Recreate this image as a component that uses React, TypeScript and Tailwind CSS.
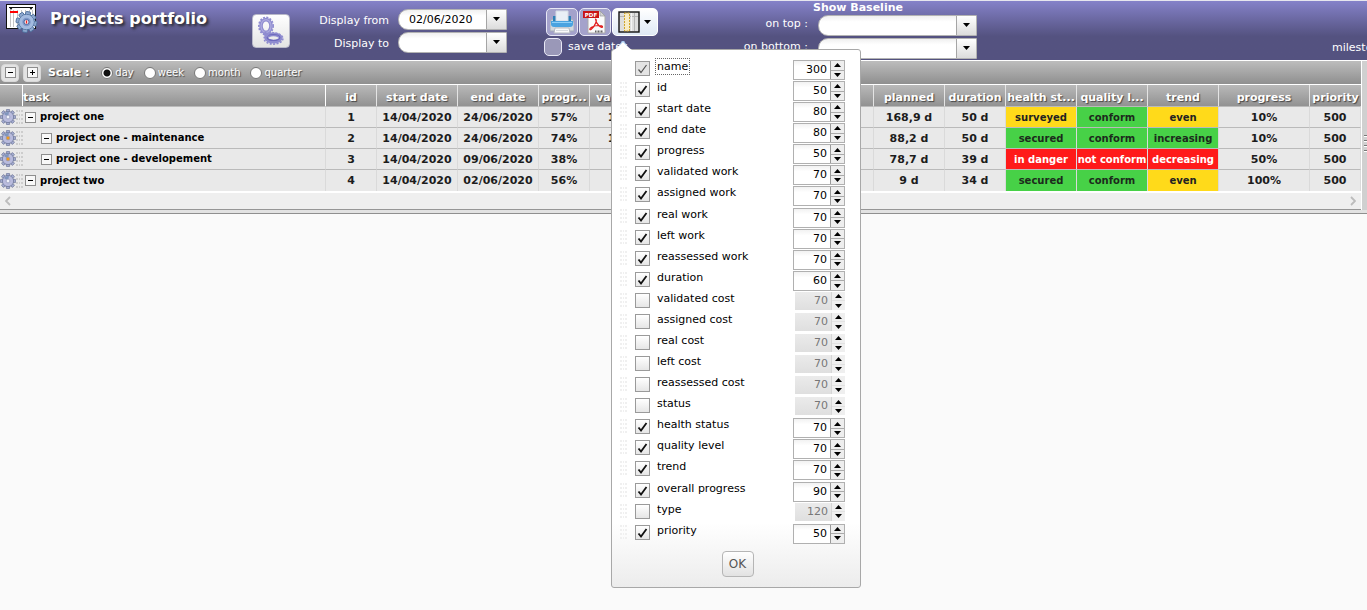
import type { ReactNode } from "react";

type Column = { label: string; width: number; on: boolean; locked?: boolean };

const columns: Column[] = [
  { label: "name", width: 300, on: true, locked: true },
  { label: "id", width: 50, on: true },
  { label: "start date", width: 80, on: true },
  { label: "end date", width: 80, on: true },
  { label: "progress", width: 50, on: true },
  { label: "validated work", width: 70, on: true },
  { label: "assigned work", width: 70, on: true },
  { label: "real work", width: 70, on: true },
  { label: "left work", width: 70, on: true },
  { label: "reassessed work", width: 70, on: true },
  { label: "duration", width: 60, on: true },
  { label: "validated cost", width: 70, on: false },
  { label: "assigned cost", width: 70, on: false },
  { label: "real cost", width: 70, on: false },
  { label: "left cost", width: 70, on: false },
  { label: "reassessed cost", width: 70, on: false },
  { label: "status", width: 70, on: false },
  { label: "health status", width: 70, on: true },
  { label: "quality level", width: 70, on: true },
  { label: "trend", width: 70, on: true },
  { label: "overall progress", width: 90, on: true },
  { label: "type", width: 120, on: false },
  { label: "priority", width: 50, on: true },
];

type Project = {
  name: string;
  child: boolean;
  before: string[];
  planned: string;
  duration: string;
  health: string;
  quality: string;
  trend: string;
  overall: string;
  priority: string;
};

const projects: Project[] = [
  { name: "project one", child: false, before: ["1", "14/04/2020", "24/06/2020", "57%", "160 d"], planned: "168,9 d", duration: "50 d", health: "surveyed", quality: "conform", trend: "even", overall: "10%", priority: "500" },
  { name: "project one - maintenance", child: true, before: ["2", "14/04/2020", "24/06/2020", "74%", "100 d"], planned: "88,2 d", duration: "50 d", health: "secured", quality: "conform", trend: "increasing", overall: "10%", priority: "500" },
  { name: "project one - developement", child: true, before: ["3", "14/04/2020", "09/06/2020", "38%", ""], planned: "78,7 d", duration: "39 d", health: "in danger", quality: "not conform", trend: "decreasing", overall: "50%", priority: "500" },
  { name: "project two", child: false, before: ["4", "14/04/2020", "02/06/2020", "56%", ""], planned: "9 d", duration: "34 d", health: "secured", quality: "conform", trend: "even", overall: "100%", priority: "500" },
];

const tones: Record<string, string> = {
  surveyed: "text-[10px] bg-[#ffda1a] text-[#222]",
  even: "text-[10px] bg-[#ffda1a] text-[#222]",
  secured: "text-[10px] bg-[#47d147] text-[#1c2a1c]",
  conform: "text-[10px] bg-[#47d147] text-[#1c2a1c]",
  increasing: "text-[10px] bg-[#47d147] text-[#1c2a1c]",
  "in danger": "text-[10px] bg-[#ff1a1a] text-white",
  "not conform": "text-[10px] bg-[#ff1a1a] text-white",
  decreasing: "text-[10px] bg-[#ff1a1a] text-white",
};

const headings = ["id", "start date", "end date", "progr...", "validated", "assigned", "real", "left", "planned", "duration", "health st...", "quality l...", "trend", "progress", "priority"];

const teeth = [0, 45, 90, 135, 180, 225, 270, 315];

function Gear({ hub, className }: { hub: string; className: string }) {
  return (
    <svg viewBox="0 0 16 16" className={className} aria-hidden="true">
      <g fill="#a3abd0" stroke="#6d7596" strokeWidth="0.7">
        {teeth.map((a) => (
          <rect key={a} x="6.4" y="0.3" width="3.2" height="4" rx="0.6" transform={`rotate(${a} 8 8)`} />
        ))}
        <circle cx="8" cy="8" r="5.6" />
      </g>
      <circle cx="8" cy="8" r="5" fill="#b9bbdd" />
      <path d="M8 8L4 5a5 5 0 0 1 5-2z" fill="#8096bd" />
      <circle cx="8" cy="8" r="1.9" fill={hub} stroke="#8f96b8" strokeWidth="0.7" />
    </svg>
  );
}

function Arrow({ up = false }: { up?: boolean }) {
  return (
    <svg viewBox="0 0 7 4" className="h-1 w-[7px] shrink-0" aria-hidden="true">
      <path d={up ? "M0 4L3.5 0L7 4z" : "M0 0H7L3.5 4z"} fill="#000" />
    </svg>
  );
}

const arrowBox = "flex w-5 items-center justify-center border-l border-[#a5a5a5] bg-linear-to-b from-white to-[#dcdcdc] pb-0.5";
const fieldBox = "flex h-[21px] overflow-hidden rounded-l-[10px] border border-[#b3b3b3] bg-linear-to-b from-[#f0f0f0] via-white via-30% to-white text-black";

function DateField({ id, value }: { id: string; value: string }) {
  return (
    <div className={fieldBox}>
      <input id={id} defaultValue={value} className="w-0 min-w-0 flex-1 bg-transparent pl-[10px] text-[11px] outline-none" />
      <button aria-label="Open calendar" className={arrowBox}><Arrow /></button>
    </div>
  );
}

function BaselineField({ id }: { id: string }) {
  return (
    <div className={"relative " + fieldBox}>
      <select id={id} className="w-full appearance-none bg-transparent text-[11px] outline-none"><option /></select>
      <span className={"pointer-events-none absolute inset-y-0 right-0 " + arrowBox}><Arrow /></span>
    </div>
  );
}

function Fold({ sign }: { sign: "-" | "+" }) {
  return (
    <svg viewBox="0 0 11 11" className="size-[11px] shrink-0" aria-hidden="true">
      <rect x="0.5" y="0.5" width="10" height="10" fill="#f8f8f8" stroke="#8e8e8e" />
      <path d={sign === "+" ? "M3 5.5H8M5.5 3V8" : "M3 5.5H8"} stroke="#000" />
    </svg>
  );
}

function Grip({ tone }: { tone: string }) {
  return (
    <svg viewBox="0 0 7 14" className="h-3.5 w-[7px] shrink-0" aria-hidden="true">
      {[0, 4, 8, 12].map((y) => (
        <path key={y} d={`M0 ${y}h2v2h-2zM3 ${y}h1v2h-1zM5 ${y}h2v2h-2z`} fill={tone} />
      ))}
    </svg>
  );
}

function Spinner({ column }: { column: Column }) {
  const { on, label, width } = column;
  return (
    <div className={on ? "flex h-5 w-[52px] border border-[#b0b0b0] bg-linear-to-b from-[#f2f2f2] to-white to-30%" : "flex h-[18px] w-[50px] bg-linear-to-b from-[#ebebeb] to-[#dfdfdf]"}>
      <input
        aria-label={`${label} width`}
        defaultValue={width}
        disabled={!on}
        className="w-0 min-w-0 flex-1 bg-transparent pr-[3px] text-right text-[11px] text-black outline-none disabled:text-[#777]"
      />
      <div className={on ? "flex w-3.5 flex-col border-l border-[#999] bg-[#eee]" : "flex w-3.5 flex-col border-l border-[#d5d5d5] bg-[#efefef]"}>
        <button aria-label={`Widen ${label}`} className={on ? "flex flex-1 items-center justify-center border-b border-[#aaa]" : "flex flex-1 items-center justify-center border-b border-[#e2e2e2]"}><Arrow up /></button>
        <button aria-label={`Narrow ${label}`} className="flex flex-1 items-center justify-center"><Arrow /></button>
      </div>
    </div>
  );
}

function ColumnMenu() {
  return (
    <div className="absolute top-[41px] -left-px z-10 w-[250px] rounded-[3px] border border-[#a8a8a8] bg-linear-to-b from-white from-88% to-[#ececec] px-2 pt-2.5 pb-2.5 text-[11px] leading-[14px] text-black">
      <svg viewBox="0 0 18 9" className="absolute -top-[9px] left-0.5 h-[9px] w-[18px]" aria-hidden="true">
        <path d="M0 9Q5 6 8 0H10Q13 6 18 9z" fill="#fff" />
        <path d="M4 6L8 0H10L14 6L9 1z" fill="#7db2e8" opacity="0.7" />
      </svg>
      <ul className="flex h-[485px] flex-col justify-between">
        {columns.map((c) => (
          <li key={c.label} className="flex h-[21px] items-start">
            <span className="w-[15px] pt-px">{!c.locked && <Grip tone="#f0f0f0" />}</span>
            <label className="flex flex-1 items-start gap-[7px]">
              <span className="relative mt-px block size-[15px] shrink-0">
                <input
                  type="checkbox"
                  defaultChecked={c.on}
                  disabled={c.locked}
                  className="peer block size-[15px] appearance-none border border-[#9a9a9a] bg-linear-to-b from-white to-[#e6e6e6] disabled:bg-[#e4e4e4] disabled:bg-none"
                />
                <svg viewBox="0 0 15 15" className="pointer-events-none absolute inset-0 hidden size-[15px] peer-checked:block" aria-hidden="true">
                  <path d="M3.5 8.5L6 11.5L11.5 4" fill="none" stroke={c.locked ? "#555" : "#111"} strokeWidth={c.locked ? 1.2 : 1.8} />
                </svg>
              </span>
              <span>
                <span className={c.locked ? "outline-1 outline-offset-1 outline-dotted outline-[#666]" : ""}>{c.label}</span>
              </span>
            </label>
            <div className="flex w-[52px] justify-end"><Spinner column={c} /></div>
            <span className="w-[7px]" />
          </li>
        ))}
      </ul>
      <div className="mt-1.5 flex justify-center pl-[3px]">
        <button className="h-[26px] w-8 rounded-[4px] border border-[#b5b5b5] bg-linear-to-b from-white to-[#e2e2e2] text-xs text-[#555]">OK</button>
      </div>
    </div>
  );
}

function Logo() {
  return (
    <svg viewBox="0 0 32 30" className="h-[30px] w-8 shrink-0" aria-hidden="true">
      <rect x="0.5" y="0.5" width="29" height="24" fill="#fff" stroke="#111" />
      <path d="M4.5 6V23M7.5 6V23M11.5 6V23M15.5 6V23M19.5 6V23M23.5 6V23M26.5 6V23" stroke="#c4c4c4" />
      <path d="M3 3.5H27" stroke="#111" />
      <path d="M3 3h4l-2 3zM23 3h4l-2 3z" fill="#111" />
      <path d="M4 8H12" stroke="#f00" strokeWidth="2" />
      <g transform="translate(20.5 18)" fill="#8da8cf" stroke="#4d6f9c" strokeWidth="0.9">
        {teeth.map((a) => (
          <rect key={a} x="-2.4" y="-10.4" width="4.8" height="5" rx="0.8" transform={`rotate(${a + 10})`} />
        ))}
        <circle r="7.6" />
        <circle r="7.3" fill="#a3bbe0" stroke="none" />
        <circle r="4.2" fill="#7f97c8" stroke="none" />
        <circle r="2.5" fill="#fff" stroke="#3d5c96" />
        <path d="M0 -1.6V1.6" stroke="#e22" strokeWidth="1.4" />
      </g>
    </svg>
  );
}

function DoubleGear() {
  return (
    <svg viewBox="0 0 28 30" className="h-[30px] w-7" aria-hidden="true">
      <g fill="none" stroke="#8f8cd0">
        <ellipse cx="9" cy="10" rx="5" ry="6.4" strokeWidth="3.6" />
        <ellipse cx="9" cy="10" rx="7.2" ry="8.6" strokeWidth="1.6" strokeDasharray="2 1.4" />
        <ellipse cx="9" cy="10" rx="5" ry="6.4" stroke="#aeacdf" strokeWidth="1.2" />
        <ellipse cx="16.5" cy="22" rx="7.2" ry="3.6" strokeWidth="3.8" />
        <ellipse cx="16.5" cy="22.5" rx="9.4" ry="5.6" strokeWidth="1.6" strokeDasharray="2 1.4" />
        <ellipse cx="16.5" cy="21.5" rx="6.4" ry="3" stroke="#6d69bd" strokeWidth="1.2" />
        <path d="M7 17L11 20" strokeWidth="4" />
      </g>
    </svg>
  );
}

function Printer() {
  return (
    <svg viewBox="0 0 24 24" className="size-6" aria-hidden="true">
      <path d="M0 13Q0 9 3 9H21Q24 9 24 13V21H0z" fill="#d5d9df" stroke="#a4acb8" />
      <path d="M3 6H6V12H18V6H21V13H3z" fill="#2d7fb5" />
      <path d="M6 1H18V11H6z" fill="#e9eff6" stroke="#d5dbe4" />
      <path d="M1 11H23V14Q23 17 20 17H4Q1 17 1 14z" fill="#4aa3e0" />
      <path d="M2 12.5H22" stroke="#8fd0f8" />
      <path d="M5 18H19L20 23H4z" fill="#fafafa" stroke="#b5bbc2" />
      <path d="M6 20.5H18" stroke="#d8dce0" />
    </svg>
  );
}

function Pdf() {
  return (
    <svg viewBox="0 0 24 24" className="size-6" aria-hidden="true">
      <path d="M5 1H17L22 6V23H5z" fill="#fafafa" stroke="#a9a9a9" />
      <path d="M17 1V6H22z" fill="#d4d4d4" stroke="#999" strokeWidth="0.7" />
      <rect x="0" y="1" width="16" height="7" fill="#c91414" />
      <text x="8" y="6.6" textAnchor="middle" fontSize="5.5" fontWeight="bold" fill="#fff">PDF</text>
      <path d="M12.5 9C14.500 9 12.5 16 8 19.5C6.5 20.5 6 18.5 9 17C13 15 20 15 19.5 17C19 18.5 13 15 12.5 9z" fill="none" stroke="#e01818" strokeWidth="1.2" />
      <path d="M12 21.5H20" stroke="#666" strokeWidth="2" strokeDasharray="1 0.5" />
    </svg>
  );
}

function ColumnsIcon() {
  return (
    <svg viewBox="0 0 22 22" className="size-[22px] shrink-0" aria-hidden="true">
      <rect x="1" y="1" width="20" height="20" fill="#dedede" stroke="#111" strokeWidth="1.4" />
      <path d="M2 5.5H20M16.5 2V20" stroke="#b5b5b5" />
      <rect x="6.5" y="2" width="5" height="18" fill="#f9edc6" stroke="#d0a52c" strokeDasharray="2 1" />
      <path d="M13.5 2V20" stroke="#f5f5f5" />
    </svg>
  );
}

const toolButton = "flex h-7 w-8 items-center justify-center rounded-[5px] border border-[#e8e8f5] bg-[#a4a2cb]";

function TopBar() {
  return (
    <header className="flex h-[61px] items-start border-t border-b border-t-[#e6e6ee] border-b-white bg-linear-to-b from-[#8582c9] to-[#545280] to-60% text-[11px] leading-[14px] whitespace-nowrap text-white">
      <div className="flex w-[252px] shrink-0 gap-3 pt-[3px] pl-1.5">
        <Logo />
        <h1 className="pt-[5px] text-base leading-5 font-bold [text-shadow:2px_2px_3px_#222]">Projects portfolio</h1>
      </div>
      <button aria-label="Automatic planning" className="mt-[13px] flex h-[34px] w-[38px] shrink-0 items-center justify-center rounded-[4px] border border-[#b9b9c9] bg-linear-to-b from-white to-[#e4e4e4]">
        <DoubleGear />
      </button>
      <div className="grid shrink-0 grid-cols-[99px_109px] items-center gap-x-[9px] gap-y-0.5 pt-2">
        <label htmlFor="from" className="pt-0.5 text-right">Display from</label>
        <DateField id="from" value="02/06/2020" />
        <label htmlFor="to" className="pt-0.5 text-right">Display to</label>
        <DateField id="to" value="" />
      </div>
      <div className="ml-[37px] w-[114px] shrink-0 pt-[7px]">
        <div className="flex gap-px pl-0.5">
          <button aria-label="Print" className={toolButton}><Printer /></button>
          <button aria-label="Export to PDF" className={toolButton}><Pdf /></button>
          <div className="relative flex-1">
            <button aria-label="Columns" className="flex h-7 w-full items-center gap-1 rounded-[5px] border border-white bg-linear-to-b from-white to-[#dfe9f5] pl-[5px]">
              <ColumnsIcon />
              <Arrow />
            </button>
            <ColumnMenu />
          </div>
        </div>
        <label className="mt-0.5 flex gap-1.5">
          <input type="checkbox" className="size-[18px] appearance-none rounded-[5px] border border-[#e8e8f5] bg-[#9a98b8]" />
          <span className="pt-0.5">save dates</span>
        </label>
      </div>
      <div className="shrink-0">
        <h2 className="h-3.5 pl-[155px] font-bold">Show Baseline</h2>
        <div className="grid grid-cols-[150px_159px] gap-x-2.5 gap-y-0.5">
          <label htmlFor="top" className="pt-0.5 text-right">on top :</label>
          <BaselineField id="top" />
          <label htmlFor="bottom" className="pt-0.5 text-right">on bottom :</label>
          <BaselineField id="bottom" />
        </div>
      </div>
      <span className="mt-10 ml-auto w-[35px] overflow-hidden">milestones</span>
    </header>
  );
}

function ScaleBar() {
  const frame = "flex size-[18px] items-center justify-center rounded-[4px] border border-[#d8d8d8] bg-[#e3e3e3]";
  return (
    <div className="flex h-6 items-center border-b border-white bg-linear-to-b from-[#bdbdbd] to-[#8f8f8f] pl-px text-white">
      <div className="flex gap-1">
        <button aria-label="Collapse all" className={frame}><Fold sign="-" /></button>
        <button aria-label="Expand all" className={frame}><Fold sign="+" /></button>
      </div>
      <fieldset className="flex items-center gap-2.5 pl-[7px]">
        <legend className="float-left pr-0.5 text-[11px] leading-[14px] font-bold [text-shadow:1px_1px_1px_#444]">Scale :</legend>
        {["day", "week", "month", "quarter"].map((s) => (
          <label key={s} className="flex items-center gap-0.5 text-[10px] leading-[14px] [text-shadow:1px_1px_1px_#444]">
            <input
              type="radio"
              name="scale"
              defaultChecked={s === "day"}
              className="size-3 appearance-none rounded-full border border-[#777] bg-white checked:bg-[radial-gradient(circle,#111_0_3px,#fff_4px)]"
            />
            {s}
          </label>
        ))}
      </fieldset>
    </div>
  );
}

function Cell({ children, tone = "" }: { children?: ReactNode; tone?: string }) {
  return <td className={"overflow-hidden border-r border-[#dadada] p-0 pt-px text-center " + tone}>{children}</td>;
}

function ProjectTable() {
  return (
    <table className="w-full table-fixed border-separate border-spacing-0 bg-[#e9e9e9] text-[11px] leading-[14px] font-bold whitespace-nowrap text-[#1c1c1c]">
      <colgroup>
        <col className="w-[23px]" />
        <col />
        <col className="w-[51px]" />
        <col className="w-[81px]" />
        <col className="w-[81px]" />
        <col className="w-[51px]" />
        <col className="w-[71px]" />
        <col className="w-[71px]" />
        <col className="w-[71px]" />
        <col className="w-[71px]" />
        <col className="w-[71px]" />
        <col className="w-[61px]" />
        <col className="w-[71px]" />
        <col className="w-[71px]" />
        <col className="w-[71px]" />
        <col className="w-[91px]" />
        <col className="w-[51px]" />
      </colgroup>
      <thead>
        <tr className="h-[21px] bg-linear-to-b from-[#b9b9b9] to-[#929292] text-white [text-shadow:1px_1px_1px_#444]">
          <th className="border-r border-white p-0" />
          <th className="border-r border-white p-0 pt-1 text-left">task</th>
          {headings.map((h, i) => (
            <th key={i} className="overflow-hidden border-r border-[#e4e4e4] p-0 pt-1 last:border-r-0">{h}</th>
          ))}
        </tr>
      </thead>
      <tbody>
        {projects.map((p) => (
          <tr key={p.name} className="h-[21px] last:h-[22px] [&>td]:border-t [&>td]:border-t-[#bababa]">
            <td className="p-0">
              <div className="flex items-center">
                <Gear hub={p.child ? "#f09a1e" : "#eef0fa"} className="size-4 shrink-0" />
                <Grip tone="#cdcdcd" />
              </div>
            </td>
            <td className="border-r border-[#dadada] p-0 text-[10px] text-black">
              <div className={p.child ? "flex items-center gap-1 pl-[18px]" : "flex items-center gap-1 pl-0.5"}>
                <button aria-label={`Collapse ${p.name}`}><Fold sign="-" /></button>
                {p.name}
              </div>
            </td>
            {p.before.map((v, i) => (
              <Cell key={i}>{v}</Cell>
            ))}
            <Cell />
            <Cell />
            <Cell />
            <Cell>{p.planned}</Cell>
            <Cell>{p.duration}</Cell>
            <Cell tone={tones[p.health]}>{p.health}</Cell>
            <Cell tone={tones[p.quality]}>{p.quality}</Cell>
            <Cell tone={tones[p.trend]}>{p.trend}</Cell>
            <Cell>{p.overall}</Cell>
            <Cell>{p.priority}</Cell>
          </tr>
        ))}
      </tbody>
    </table>
  );
}

function Chevron({ d }: { d: string }) {
  return (
    <svg viewBox="0 0 6 10" className="h-2.5 w-1.5" aria-hidden="true">
      <path d={d} fill="none" stroke="#bcbcbc" strokeWidth="1.8" />
    </svg>
  );
}

export default function App() {
  return (
    <div className="min-h-screen overflow-hidden bg-[#fafafa] font-['DejaVu_Sans',Verdana,sans-serif]">
      <TopBar />
      <main>
        <div className="flex">
          <div className="min-w-0 flex-1">
            <ScaleBar />
            <ProjectTable />
            <div className="flex h-[19px] items-center justify-between border-t-2 border-b border-t-white border-b-[#969696] bg-[#efefef] px-[5px]">
              <Chevron d="M5 1L1 5L5 9" />
              <Chevron d="M1 1L5 5L1 9" />
            </div>
          </div>
          <div className="flex w-1.5 items-center justify-end border-l border-white bg-[#d0d0d0]">
            <div className="mt-4 flex flex-col gap-[3px]">
              {[0, 1, 2, 3].map((i) => (
                <span key={i} className="h-0.5 w-[3px] border-t border-[#777] bg-white" />
              ))}
            </div>
          </div>
        </div>
        <div className="h-1 border-b border-[#8f8f8f] bg-[#e2e2e2]" />
      </main>
    </div>
  );
}
